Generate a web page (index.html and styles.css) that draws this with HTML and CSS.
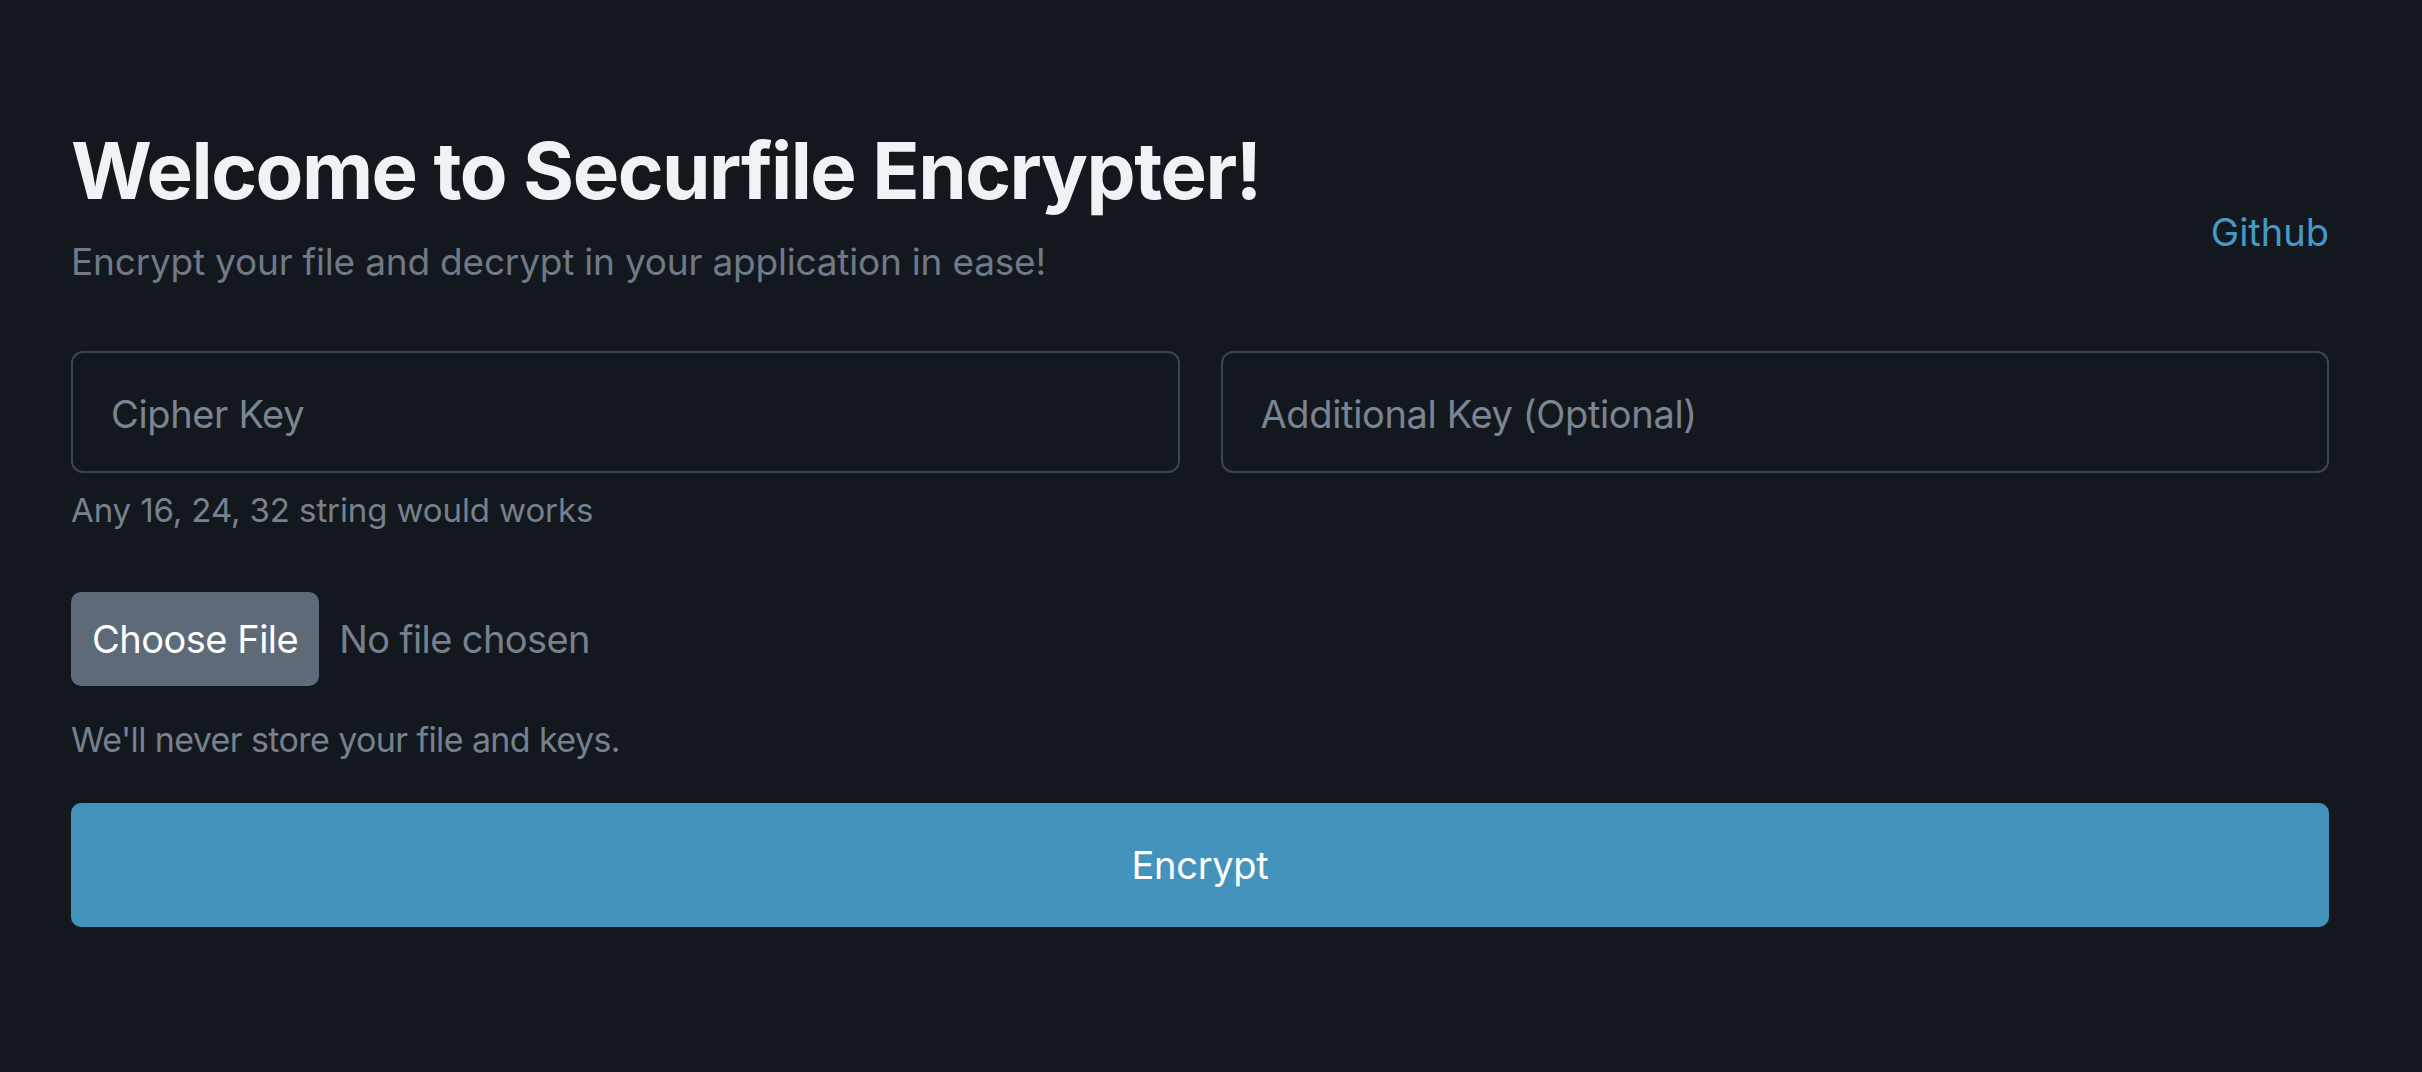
FILE: index.html
```html
<!DOCTYPE html>
<html lang="en">
<head>
<meta charset="utf-8">
<title>Securfile Encrypter</title>
<link rel="stylesheet" href="styles.css">
</head>
<body>
<main class="page">
  <header class="header">
    <div class="intro">
      <h1 class="title">Welcome to Securfile Encrypter!</h1>
      <p class="lead">Encrypt your file and decrypt in your application in ease!</p>
    </div>
    <a class="github" href="#">Github</a>
  </header>
  <form class="form">
    <div class="keys">
      <input class="field" type="text" placeholder="Cipher Key">
      <input class="field" type="text" placeholder="Additional Key (Optional)">
    </div>
    <p class="hint">Any 16, 24, 32 string would works</p>
    <div class="file-row">
      <span class="file-btn">Choose File</span>
      <span class="file-name">No file chosen</span>
    </div>
    <p class="hint hint-file">We'll never store your file and keys.</p>
    <button class="encrypt" type="button">Encrypt</button>
  </form>
</main>
</body>
</html>
```
FILE: styles.css
```css
* { box-sizing: border-box; }
html, body {
  margin: 0;
  padding: 0;
  background: #13181f;
  height: 100%;
}
body {
  font-family: Inter, "Noto Sans", "Liberation Sans", sans-serif;
  color: #f1f2f5;
}
.page {
  padding: 124px 93px 0 71px;
}
.header {
  display: flex;
  justify-content: space-between;
  align-items: flex-start;
}
.title {
  margin: 0 0 16px;
  font-size: 78px;
  line-height: 94px;
  font-weight: 700;
  color: #f1f2f5;
  letter-spacing: -1.5px;
}
.lead {
  margin: 0;
  font-size: 37px;
  line-height: 55.5px;
  color: #6f7a86;
  letter-spacing: -0.2px;
}
.github {
  margin-top: 80px;
  font-size: 38px;
  line-height: 57px;
  color: #4699c6;
  text-decoration: none;
}
.form {
  margin-top: 61px;
}
.keys {
  display: flex;
  gap: 41px;
}
.field {
  flex: 1;
  min-width: 0;
  height: 122px;
  padding: 4px 38px 0;
  background: #13181f;
  border: 2px solid #3a4452;
  border-radius: 12px;
  font-family: inherit;
  font-size: 38px;
  letter-spacing: -0.35px;
  color: #f1f2f5;
  outline: none;
}
.field::placeholder {
  color: #7b8591;
}
.hint {
  margin: 13px 0 0;
  font-size: 33px;
  line-height: 49.5px;
  color: #76818d;
  letter-spacing: -0.1px;
}
.file-row {
  display: flex;
  align-items: center;
  gap: 20px;
  margin-top: 57px;
}
.file-btn {
  display: flex;
  align-items: center;
  height: 94px;
  padding: 0 21px;
  background: #5e6a78;
  border-radius: 10px;
  font-size: 38px;
  letter-spacing: -0.5px;
  color: #ffffff;
}
.file-name {
  font-size: 38px;
  letter-spacing: -0.6px;
  color: #76818d;
}
.hint-file {
  margin-top: 28px;
  font-size: 34px;
  line-height: 51px;
  letter-spacing: -0.6px;
}
.encrypt {
  display: block;
  width: 100%;
  height: 124px;
  margin-top: 38px;
  border: 0;
  border-radius: 10px;
  background: #4493bd;
  color: #ffffff;
  font-family: inherit;
  font-size: 38px;
  letter-spacing: -0.3px;
  cursor: pointer;
}
```
